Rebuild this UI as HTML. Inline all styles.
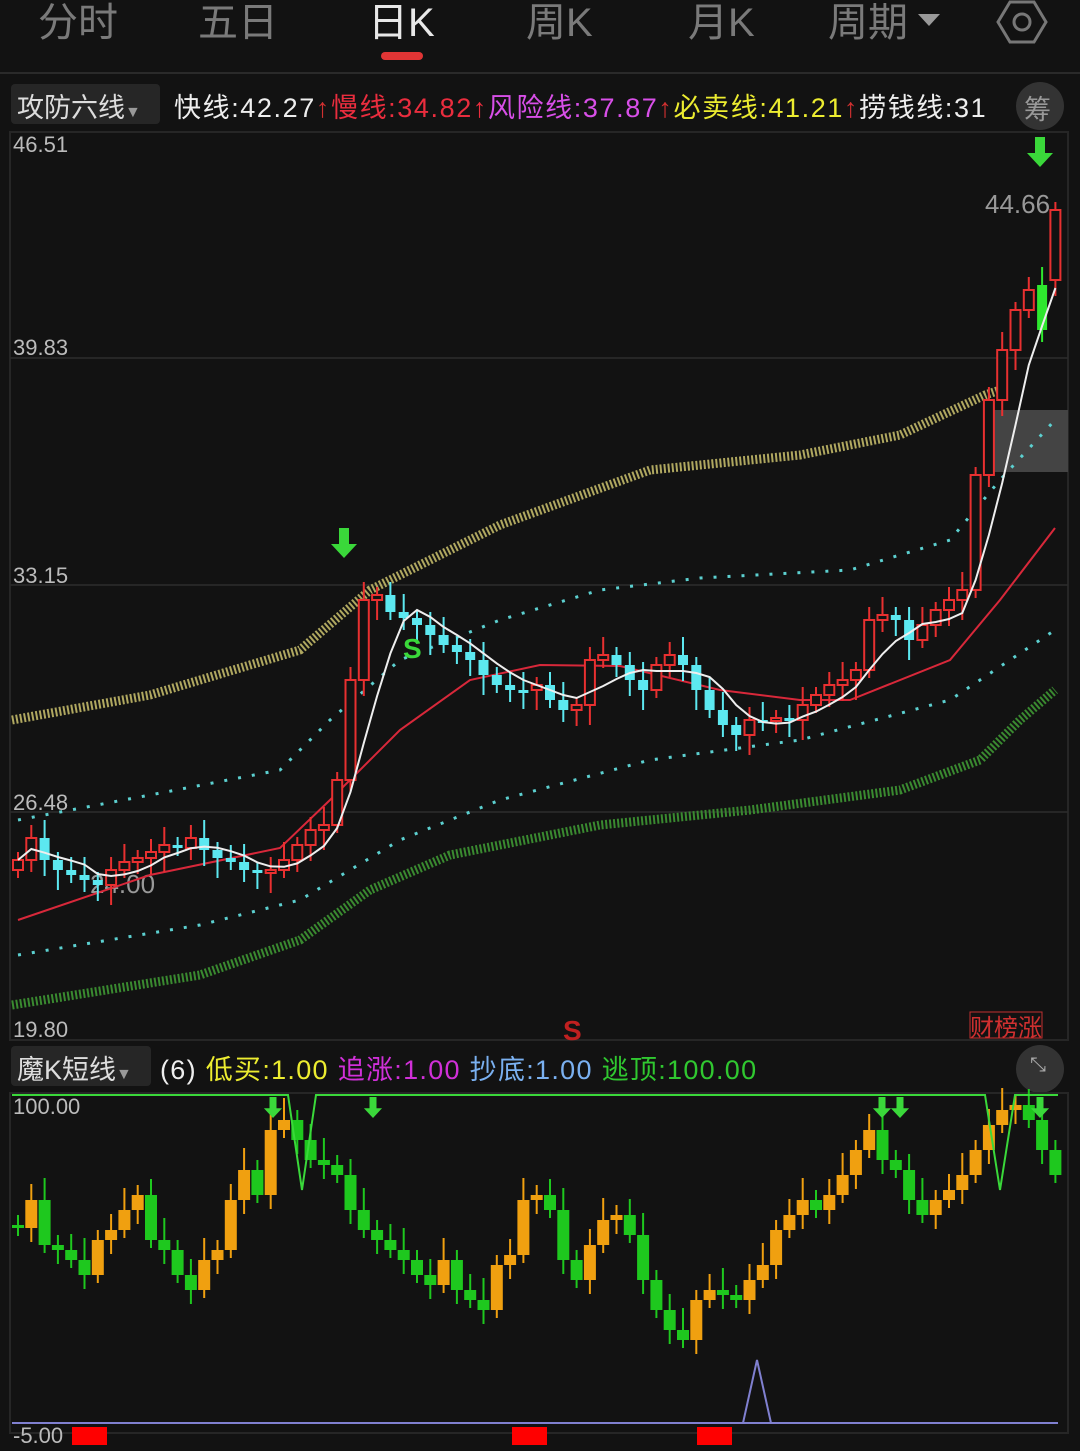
<!DOCTYPE html>
<html><head><meta charset="utf-8"><style>
body{margin:0;width:1080px;height:1451px;background:#121212;overflow:hidden;font-family:"Liberation Sans","Noto Sans CJK SC",sans-serif;position:relative}
.t{position:absolute;white-space:nowrap}
</style></head><body>
<div class="t" style="left:38px;top:-10px;font-size:40px;color:#7a7a7a">分时</div>
<div class="t" style="left:198px;top:-10px;font-size:40px;color:#7a7a7a">五日</div>
<div class="t" style="left:368px;top:-10px;font-size:40px;color:#e8e8e8">日K</div>
<div style="position:absolute;left:381px;top:52px;width:42px;height:8px;border-radius:4px;background:#e03535"></div>
<div class="t" style="left:526px;top:-10px;font-size:40px;color:#7a7a7a">周K</div>
<div class="t" style="left:688px;top:-10px;font-size:40px;color:#7a7a7a">月K</div>
<div class="t" style="left:828px;top:-10px;font-size:40px;color:#7a7a7a">周期</div>
<svg style="position:absolute;left:0;top:0" width="1080" height="80"><polygon points="918,14 940,14 929,26" fill="#999"/>
<polygon points="1010,2 1034,2 1046,22 1034,42 1010,42 998,22" fill="none" stroke="#777" stroke-width="3"/><circle cx="1022" cy="22" r="8" fill="none" stroke="#777" stroke-width="3"/>
<line x1="0" y1="73" x2="1080" y2="73" stroke="#2a2a2a" stroke-width="2"/></svg>
<div style="position:absolute;left:11px;top:84px;width:149px;height:40px;background:#262626;border-radius:4px"></div>
<div class="t" style="left:17px;top:86px;font-size:27px;color:#ddd">攻防六线<span style="font-size:16px;color:#999">▼</span></div>
<div class="t" style="left:174px;top:86px;font-size:27px;letter-spacing:1.6px"><span style="color:#eee">快线:42.27</span><span style="color:#d03030">↑</span><span style="color:#ea2d3e">慢线:34.82↑</span><span style="color:#d84fe8">风险线:37.87</span><span style="color:#d03030">↑</span><span style="color:#ecec30">必卖线:41.21</span><span style="color:#d03030">↑</span><span style="color:#eee">捞钱线:31</span></div>
<div style="position:absolute;left:1016px;top:82px;width:48px;height:48px;border-radius:24px;background:#333"></div>
<div class="t" style="left:1024px;top:88px;font-size:27px;color:#999">筹</div>
<div style="position:absolute;left:11px;top:1046px;width:140px;height:40px;background:#262626;border-radius:4px"></div>
<div class="t" style="left:17px;top:1048px;font-size:27px;color:#ddd">魔K短线<span style="font-size:16px;color:#999">▼</span></div>
<div class="t" style="left:160px;top:1048px;font-size:27px;letter-spacing:1.3px"><span style="color:#eee">(6)</span> <span style="color:#ecec30">低买:1.00</span> <span style="color:#d030d8">追涨:1.00</span> <span style="color:#7ab0f0">抄底:1.00</span> <span style="color:#30c830">逃顶:100.00</span></div>
<div style="position:absolute;left:1016px;top:1045px;width:48px;height:48px;border-radius:24px;background:#333"></div>
<div class="t" style="left:1030px;top:1054px;font-size:20px;color:#aaa">⤡</div>
<svg id="c" style="position:absolute;left:0;top:0" width="1080" height="1451" font-family="Liberation Sans, sans-serif">
<rect x="10" y="132" width="1058" height="908" fill="none" stroke="#262626" stroke-width="2"/>
<line x1="10" y1="358" x2="1068" y2="358" stroke="#2c2c2c" stroke-width="1.5"/>
<line x1="10" y1="585" x2="1068" y2="585" stroke="#2c2c2c" stroke-width="1.5"/>
<line x1="10" y1="812" x2="1068" y2="812" stroke="#2c2c2c" stroke-width="1.5"/>
<rect x="10" y="1093" width="1058" height="340" fill="none" stroke="#262626" stroke-width="2"/>
<rect x="985" y="410" width="83" height="62" fill="#444"/>
<g fill="#bbb" font-size="22"><text x="13" y="152">46.51</text><text x="13" y="355">39.83</text><text x="13" y="583">33.15</text><text x="13" y="810">26.48</text><text x="13" y="1037">19.80</text><text x="13" y="1114">100.00</text><text x="13" y="1443">-5.00</text></g>
<text x="985" y="213" fill="#999" font-size="26">44.66</text>
<text x="90" y="893" fill="#999" font-size="26">24.00</text>
<polyline points="12,720 150,695 300,650 370,590 500,525 650,470 800,455 900,435 985,395 1000,390" fill="none" stroke="#b0a860" stroke-width="9" stroke-dasharray="2 2"/>
<polyline points="18,820 150,795 280,770 330,720 400,660 500,620 600,590 700,578 850,570 950,540 1000,480 1055,420" fill="none" stroke="#5cd0d0" stroke-width="3" stroke-dasharray="3 11"/>
<polyline points="18,955 200,925 300,900 400,840 500,800 650,760 800,740 950,700 1055,630" fill="none" stroke="#5cd0d0" stroke-width="3" stroke-dasharray="3 11"/>
<polyline points="12,1005 200,975 300,940 370,890 450,855 600,825 750,810 900,790 980,760 1020,720 1055,690" fill="none" stroke="#3a8a30" stroke-width="9" stroke-dasharray="2 2"/>
<polyline points="18,920 150,875 280,848 330,800 400,730 470,680 540,665 620,666 720,690 800,700 850,700 950,660 1000,600 1055,528" fill="none" stroke="#d8283a" stroke-width="2"/>
<g id="k"></g><g id="k2"></g>
<polyline points="12,1095 288,1095 302,1190 316,1095 985,1095 1000,1190 1015,1095 1058,1095" fill="none" stroke="#3ad83a" stroke-width="2"/>
<line x1="12" y1="1423" x2="1058" y2="1423" stroke="#8080d0" stroke-width="2"/>
<polygon points="743,1423 757,1360 771,1423" fill="none" stroke="#8080d0" stroke-width="2"/>
<rect x="72" y="1427" width="35" height="18" fill="#f00"/><rect x="512" y="1427" width="35" height="18" fill="#f00"/><rect x="697" y="1427" width="35" height="18" fill="#f00"/>
<g fill="#3ad83a" id="ar"></g>
<text x="403" y="658" fill="#3ad83a" font-size="28" font-weight="bold">S</text>
<text x="563" y="1040" fill="#c02020" font-size="28" font-weight="bold">S</text>
<rect x="970" y="1012" width="72" height="26" fill="none" stroke="#c03030"/>
<text x="970" y="1036" fill="#d03030" font-size="24">财榜涨</text>
</svg>
<script>
var ns="http://www.w3.org/2000/svg";
function el(p,n,a){var e=document.createElementNS(ns,n);for(var k in a)e.setAttribute(k,a[k]);p.appendChild(e);return e}
var c=[860,838,860,870,875,880,885,870,862,858,852,845,848,838,850,858,862,870,872,870,860,845,830,825,780,680,600,595,612,618,625,635,645,652,660,675,685,690,690,685,700,710,705,660,655,665,680,690,665,655,665,690,710,725,735,720,720,718,720,705,695,685,680,670,620,615,620,640,625,610,600,590,475,400,350,310,290,280,210];
var K=document.getElementById('k');var wm=[];
for(var i=0;i<c.length;i++){var x=18+i*13.3,o=i?c[i-1]:870,cl=c[i];var up=cl<o;var col=up?'#e83030':'#5ce8f0';
if(i==77){col='#2ee82e';up=false;o=330;cl=285}
var t=Math.min(o,cl),b=Math.max(o,cl);if(b-t<3)b=t+3;
el(K,'line',{x1:x,y1:t-8-(i%3)*5,x2:x,y2:b+8+(i%4)*4,stroke:col,'stroke-width':2});
if(up)el(K,'rect',{x:x-5,y:t,width:10,height:b-t,fill:'#121212',stroke:col,'stroke-width':2});else el(K,'rect',{x:x-5,y:t,width:10,height:b-t,fill:col});
var s=0,n=0;for(var j=Math.max(0,i-4);j<=i;j++){s+=c[j];n++}wm.push(x+','+(s/n))}
el(K,'polyline',{points:wm.join(' '),fill:'none',stroke:'#eee','stroke-width':2});
var d=[1228,1200,1245,1250,1260,1275,1240,1230,1210,1195,1240,1250,1275,1290,1260,1250,1200,1170,1195,1130,1120,1140,1160,1165,1175,1210,1230,1240,1250,1260,1275,1285,1260,1290,1300,1310,1265,1255,1200,1195,1210,1260,1280,1245,1220,1215,1235,1280,1310,1330,1340,1300,1290,1295,1300,1280,1265,1230,1215,1200,1210,1195,1175,1150,1130,1160,1170,1200,1215,1200,1190,1175,1150,1125,1110,1105,1120,1150,1175];
var K2=document.getElementById('k2');
for(var i=0;i<d.length;i++){var x=18+i*13.3,o=i?d[i-1]:1225,cl=d[i];var col=cl<o?'#f0a010':'#1ec81e';var t=Math.min(o,cl),b=Math.max(o,cl);if(b-t<3)b=t+3;
el(K2,'line',{x1:x,y1:t-10-(i%3)*6,x2:x,y2:b+8+(i%2)*6,stroke:col,'stroke-width':2});el(K2,'rect',{x:x-6,y:t,width:12,height:b-t,fill:col})}
var A=document.getElementById('ar');
[[344,528,1],[1040,137,1],[273,1097,0.7],[373,1097,0.7],[882,1097,0.7],[900,1097,0.7],[1040,1097,0.7]].forEach(function(a){var x=a[0],y=a[1],s=a[2];el(A,'polygon',{points:[x-5*s,y,x+5*s,y,x+5*s,y+16*s,x+13*s,y+16*s,x,y+30*s,x-13*s,y+16*s,x-5*s,y+16*s].join(' ')})});
</script>
</body></html>
